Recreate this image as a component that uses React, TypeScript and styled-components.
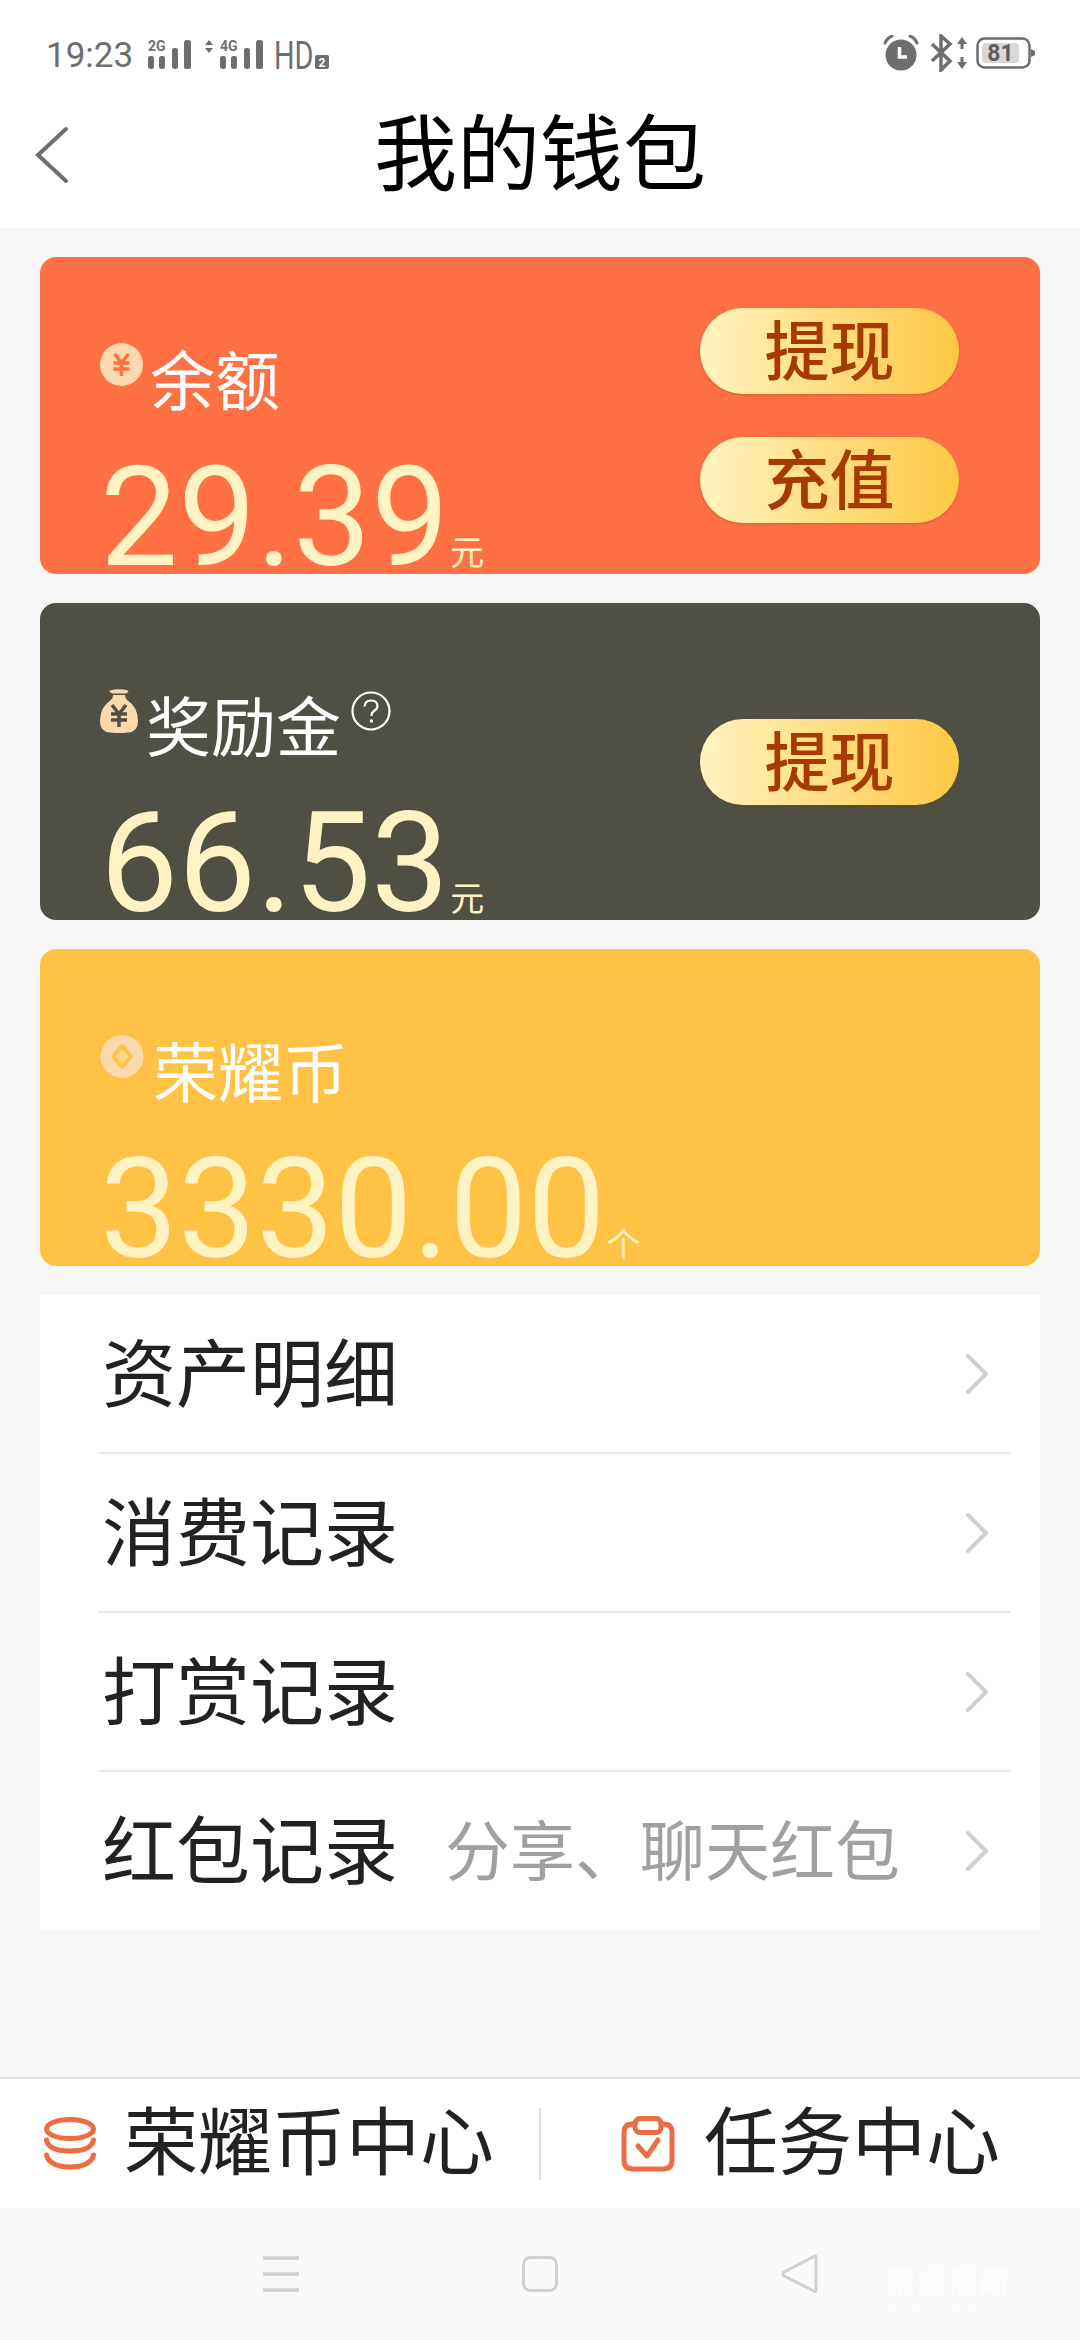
import React from 'react';
import styled, {createGlobalStyle} from 'styled-components';

const CJK = `Roboto, "Noto Sans CJK SC", sans-serif`;

const Global = createGlobalStyle`
  html, body {
    margin: 0;
    padding: 0;
    background: #f7f7f7;
  }
  * {
    box-sizing: border-box;
  }
`;

const Page = styled.div`
  display: flex;
  flex-direction: column;
  width: 1080px;
  height: 2340px;
  overflow: hidden;
  background: #f7f7f7;
  font-family: ${CJK};
`;

const TopBar = styled.header`
  height: 228px;
  background: #fff;
`;

const StatusBar = styled.div`
  display: flex;
  align-items: center;
  justify-content: space-between;
  height: 72px;
  padding: 39px 44px 0 46px;
  color: #6e6e6e;
`;

const StatusGroup = styled.div<{$lift?: number}>`
  display: flex;
  align-items: center;
  margin-top: ${({$lift}) => -($lift || 0)}px;
`;

const Clock = styled.span`
  width: 102px;
  font-family: Roboto, sans-serif;
  font-size: 35px;
  line-height: 40px;
`;

const Hd = styled.span`
  width: 41px;
  margin-left: 9px;
  transform: scaleX(0.74);
  transform-origin: left center;
  font-family: Roboto, sans-serif;
  font-size: 39px;
  line-height: 40px;
`;

const NavRow = styled.div`
  position: relative;
  display: flex;
  align-items: center;
  justify-content: center;
  height: 156px;
`;

const BackButton = styled.svg`
  position: absolute;
  left: 33px;
  top: 54px;
`;

const Title = styled.h1`
  margin: 12px 0 0;
  font-size: 83px;
  font-weight: 400;
  line-height: 100px;
  color: #000;
`;

const Content = styled.main`
  display: flex;
  flex-direction: column;
  gap: 29px;
  padding: 29px 40px 0;
`;

const Card = styled.section<{$bg: string}>`
  display: flex;
  align-items: center;
  justify-content: space-between;
  height: 317px;
  padding: 0 81px 0 60px;
  border-radius: 16px;
  background: ${({$bg}) => $bg};
`;

const CardInfo = styled.div`
  display: flex;
  flex-direction: column;
  align-self: stretch;
  padding-top: 86px;
`;

const CardHead = styled.div`
  display: flex;
  align-items: flex-start;
  height: 120px;
`;

const CardIcon = styled.svg`
  flex: none;
`;

const CardLabel = styled.span<{$gap: number}>`
  margin-left: ${({$gap}) => $gap}px;
  font-size: 65px;
  line-height: 80px;
  color: #fff;
`;

const HelpIcon = styled.svg`
  flex: none;
  margin: 2px 0 0 10px;
`;

const Amount = styled.div`
  display: flex;
  align-items: baseline;
  color: #fff3c4;
`;

const AmountValue = styled.span`
  font-family: Roboto, sans-serif;
  font-size: 139px;
  line-height: 110px;
`;

const AmountUnit = styled.span`
  margin-left: 1px;
  font-size: 34px;
  line-height: 40px;
`;

const Actions = styled.div`
  display: flex;
  flex-direction: column;
  gap: 43px;
`;

const ActionButton = styled.button`
  width: 259px;
  height: 86px;
  padding: 5px 0 0;
  border: 0;
  border-radius: 43px;
  background: linear-gradient(90deg, #fff3c0 0%, #ffc843 100%);
  box-shadow: 0 1px 3px rgba(120, 60, 0, 0.35);
  font-family: ${CJK};
  font-size: 65px;
  font-weight: 500;
  line-height: 81px;
  color: #a63a00;
`;

const Menu = styled.ul`
  margin: 0;
  padding: 0;
  list-style: none;
  background: #fff;
`;

const MenuItem = styled.li`
  height: 159px;
  margin-left: 59px;
  margin-right: 29px;
  padding: 4px 22px 0 3px;
  display: flex;
  align-items: center;
  border-bottom: 2px solid #e8e8e8;

  &:last-child {
    height: 158px;
    border-bottom: 0;
  }
`;

const MenuLabel = styled.span`
  font-size: 74px;
  line-height: 100px;
  color: #222;
`;

const MenuNote = styled.span`
  margin-left: 47px;
  font-size: 65px;
  line-height: 100px;
  color: #a0a0a0;
`;

const MenuArrow = styled.svg`
  flex: none;
  margin-left: auto;
  margin-top: -4px;
`;

const BottomBar = styled.div`
  display: flex;
  align-items: center;
  height: 131px;
  margin-top: auto;
  border-top: 2px solid #e2e2e2;
  background: #fff;
`;

const BottomTab = styled.div<{$width: number; $pad: number}>`
  display: flex;
  align-items: center;
  width: ${({$width}) => $width}px;
  padding-left: ${({$pad}) => $pad}px;
`;

const BottomLabel = styled.span<{$gap: number}>`
  margin-left: ${({$gap}) => $gap}px;
  font-size: 74px;
  line-height: 100px;
  color: #222;
`;

const BottomDivider = styled.div`
  flex: none;
  width: 2px;
  height: 72px;
  background: #dedede;
`;

const SystemNav = styled.nav`
  position: relative;
  display: flex;
  align-items: center;
  justify-content: center;
  gap: 223px;
  height: 132px;
  background: #f9f9f9;
`;

const Watermark = styled.div`
  position: absolute;
  right: 42px;
  top: 57px;
  display: flex;
  gap: 4px;
  color: #fcfcfc;
`;

const WatermarkText = styled.div`
  display: flex;
  flex-direction: column;
  font-size: 31px;
  font-weight: 700;
  line-height: 36px;
`;

const WatermarkUrl = styled.span`
  font-family: Roboto, sans-serif;
  font-size: 11px;
  font-weight: 700;
  letter-spacing: 4px;
  line-height: 16px;
  white-space: nowrap;
`;

const Yuan = ({cx, cy, color}: {cx: number; cy: number; color: string}) => (
  <path
    d={`M${cx - 7} ${cy - 11}L${cx} ${cy - 2}L${cx + 7} ${cy - 11}M${cx - 8} ${cy - 2}H${cx + 8}M${cx - 8} ${cy + 4}H${cx + 8}M${cx} ${cy - 2}V${cy + 11}`}
    fill="none"
    stroke={color}
    strokeWidth="3.5"
  />
);

const CoinIcon = () => (
  <CardIcon width="43" height="43" viewBox="0 0 43 43">
    <circle cx="21.5" cy="21.5" r="21.5" fill="#fbd9ad" />
    <Yuan cx={21.5} cy={22} color="#ff7043" />
  </CardIcon>
);

const BagIcon = () => (
  <CardIcon width="38" height="44" viewBox="0 0 38 44">
    <path d="M10 1.5Q19 -1 28 1.5Q29 4 25.5 4.5H12.5Q9 4 10 1.5Z" fill="#fbd9ad" />
    <path
      d="M13 6H25Q25 9 27 11Q38 18 38 32Q38 43 28 43.5Q19 44.5 10 43.5Q0 43 0 32Q0 18 11 11Q13 9 13 6Z"
      fill="#fbd9ad"
    />
    <Yuan cx={19} cy={27} color="#4f4f44" />
  </CardIcon>
);

const HonorCoinIcon = () => (
  <CardIcon width="44" height="43" viewBox="0 0 44 43">
    <circle cx="22" cy="21.5" r="21.5" fill="#fbd9ad" />
    <path d="M22 11L31 21.5L22 32L13 21.5Z" fill="#ffd680" stroke="#ffc244" strokeWidth="3.5" strokeLinejoin="round" />
  </CardIcon>
);

const Help = () => (
  <HelpIcon width="40" height="40" viewBox="0 0 40 40">
    <circle cx="20" cy="20" r="18.5" fill="none" stroke="#fff" strokeWidth="2.2" />
    <path d="M13.5 15.5Q14 9.5 20 9.5Q26.5 9.5 26.5 15Q26.5 18 23 20Q20.5 21.5 20.5 25" fill="none" stroke="#fff" strokeWidth="2.2" />
    <circle cx="20.5" cy="30" r="1.7" fill="#fff" />
  </HelpIcon>
);

const Arrow = () => (
  <MenuArrow width="24" height="40" viewBox="0 0 24 40">
    <path d="M3 2L21 20L3 38" fill="none" stroke="#cfd1cc" strokeWidth="4" strokeLinecap="round" strokeLinejoin="round" />
  </MenuArrow>
);

const Signal = ({label, arrows}: {label: string; arrows?: boolean}) => (
  <svg width={arrows ? 60 : 46} height="34" viewBox={`${arrows ? -15 : 0} 0 ${arrows ? 60 : 46} 34`} style={{marginLeft: arrows ? 11 : 0}}>
    {arrows && <path d="M-15 6L-11 1L-7 6ZM-15 9L-11 14L-7 9Z" fill="#6e6e6e" />}
    <text x="0" y="11.5" fontFamily="Roboto, sans-serif" fontSize="14" fontWeight="700" fill="#6e6e6e">
      {label}
    </text>
    <rect x="0" y="17" width="6" height="13" rx="2.5" fill="#6e6e6e" />
    <rect x="11" y="17" width="6" height="13" rx="2.5" fill="#6e6e6e" />
    <rect x="24" y="9" width="6" height="21" rx="2.5" fill="#6e6e6e" />
    <rect x="36" y="1" width="7" height="29" rx="2.5" fill="#6e6e6e" />
  </svg>
);

const StatusRight = () => (
  <>
    <svg width="36" height="36" viewBox="0 0 36 36">
      <path d="M2 8Q4 3 9 1M34 8Q32 3 27 1" fill="none" stroke="#6e6e6e" strokeWidth="3" strokeLinecap="round" />
      <circle cx="18" cy="20" r="15.5" fill="#6e6e6e" />
      <path d="M16.5 12V22H24" fill="none" stroke="#fff" strokeWidth="3.5" />
    </svg>
    <svg width="38" height="38" viewBox="0 0 38 38" style={{marginLeft: 11}}>
      <path d="M2 10L20 27L11 36V2L20 10L2 27" fill="none" stroke="#6e6e6e" strokeWidth="3.5" />
      <path d="M32 3L27 10H37ZM32 35L27 28H37Z" fill="#6e6e6e" />
      <path d="M32 8V15M32 23V30" stroke="#6e6e6e" strokeWidth="3" />
    </svg>
    <svg width="60" height="32" viewBox="0 0 60 32" style={{marginLeft: 8}}>
      <rect x="1.5" y="1.5" width="52" height="29" rx="7" fill="none" stroke="#6e6e6e" strokeWidth="2.5" />
      <rect x="6" y="6" width="37" height="20" rx="4" fill="#d8d8d8" />
      <path d="M55 12L59 14V18L55 20Z" fill="#6e6e6e" />
      <text x="24.5" y="24" textAnchor="middle" fontFamily="Roboto, sans-serif" fontSize="23" fontWeight="700" fill="#5e5e5e">
        81
      </text>
    </svg>
  </>
);

const records = [
  {label: '资产明细'},
  {label: '消费记录'},
  {label: '打赏记录'},
  {label: '红包记录', note: '分享、聊天红包'},
];

const App = () => {
  return (
    <Page>
      <Global />
      <TopBar>
        <StatusBar>
          <StatusGroup>
            <Clock>19:23</Clock>
            <Signal label="2G" />
            <Signal label="4G" arrows />
            <Hd>HD</Hd>
            <svg width="14" height="14" viewBox="0 0 14 14" style={{marginTop: 12}}>
              <rect width="14" height="14" rx="2" fill="#6e6e6e" />
              <text x="7" y="11.5" textAnchor="middle" fontFamily="Roboto, sans-serif" fontSize="12" fontWeight="700" fill="#fff">
                2
              </text>
            </svg>
          </StatusGroup>
          <StatusGroup $lift={5}>
            <StatusRight />
          </StatusGroup>
        </StatusBar>
        <NavRow>
          <BackButton width="36" height="58" viewBox="0 0 36 58">
            <path d="M33 3L5 29L33 55" fill="none" stroke="#6e6e6e" strokeWidth="4" strokeLinecap="round" />
          </BackButton>
          <Title>我的钱包</Title>
        </NavRow>
      </TopBar>

      <Content>
        <Card $bg="#ff7045">
          <CardInfo>
            <CardHead>
              <CoinIcon />
              <CardLabel $gap={7}>余额</CardLabel>
            </CardHead>
            <Amount>
              <AmountValue>29.39</AmountValue>
              <AmountUnit>元</AmountUnit>
            </Amount>
          </CardInfo>
          <Actions>
            <ActionButton>提现</ActionButton>
            <ActionButton>充值</ActionButton>
          </Actions>
        </Card>

        <Card $bg="#4f4f44">
          <CardInfo>
            <CardHead>
              <BagIcon />
              <CardLabel $gap={8}>奖励金</CardLabel>
              <Help />
            </CardHead>
            <Amount>
              <AmountValue>66.53</AmountValue>
              <AmountUnit>元</AmountUnit>
            </Amount>
          </CardInfo>
          <Actions>
            <ActionButton>提现</ActionButton>
          </Actions>
        </Card>

        <Card $bg="#ffc244">
          <CardInfo>
            <CardHead>
              <HonorCoinIcon />
              <CardLabel $gap={9}>荣耀币</CardLabel>
            </CardHead>
            <Amount>
              <AmountValue>3330.00</AmountValue>
              <AmountUnit>个</AmountUnit>
            </Amount>
          </CardInfo>
        </Card>

        <Menu>
          {records.map((record) => (
            <MenuItem key={record.label}>
              <MenuLabel>{record.label}</MenuLabel>
              {record.note && <MenuNote>{record.note}</MenuNote>}
              <Arrow />
            </MenuItem>
          ))}
        </Menu>
      </Content>

      <BottomBar>
        <BottomTab $width={539} $pad={43}>
          <svg width="54" height="54" viewBox="0 0 54 54">
            <g fill="none" stroke="#ee6c3f" strokeWidth="5" strokeLinecap="round">
              <ellipse cx="27" cy="12" rx="23.5" ry="9.5" />
              <path d="M3.5 23C5 31 15 34 27 34S49 31 50.5 23" />
              <path d="M3.5 38C5 46 15 50 27 50S49 46 50.5 38" />
            </g>
          </svg>
          <BottomLabel $gap={27}>荣耀币中心</BottomLabel>
        </BottomTab>
        <BottomDivider />
        <BottomTab $width={539} $pad={80}>
          <svg width="54" height="56" viewBox="0 0 54 56">
            <g fill="none" stroke="#ee6c3f" strokeWidth="5" strokeLinecap="round" strokeLinejoin="round">
              <path d="M14 8H11Q3 8 3 17V44Q3 53 12 53H42Q51 53 51 44V17Q51 8 43 8H40" />
              <rect x="14" y="2.5" width="26" height="14" rx="5" />
              <path d="M17 30L26 40L37 24" />
            </g>
          </svg>
          <BottomLabel $gap={29}>任务中心</BottomLabel>
        </BottomTab>
      </BottomBar>

      <SystemNav>
        <svg width="36" height="36" viewBox="0 0 36 36">
          <path d="M0 2H36M0 18H36M0 34H36" stroke="#d0d0d0" strokeWidth="3.5" />
        </svg>
        <svg width="36" height="36" viewBox="0 0 36 36">
          <rect x="1.5" y="1.5" width="33" height="33" rx="7" fill="none" stroke="#d0d0d0" strokeWidth="3" />
        </svg>
        <svg width="37" height="40" viewBox="0 0 37 40">
          <path d="M34 2Q35 1.5 35 4V36Q35 38.5 33 37L3 22Q1 20 3 18Z" fill="none" stroke="#d0d0d0" strokeWidth="3" strokeLinejoin="round" />
        </svg>
        <Watermark>
          <WatermarkText>
            荣耀渭南
            <WatermarkUrl>WWW.YEWN.CN</WatermarkUrl>
          </WatermarkText>
          <svg width="25" height="44" viewBox="0 0 25 44">
            <rect x="1.5" y="1.5" width="22" height="41" rx="4" fill="none" stroke="#fcfcfc" strokeWidth="2" />
          </svg>
        </Watermark>
      </SystemNav>
    </Page>
  );
};

export default App;
